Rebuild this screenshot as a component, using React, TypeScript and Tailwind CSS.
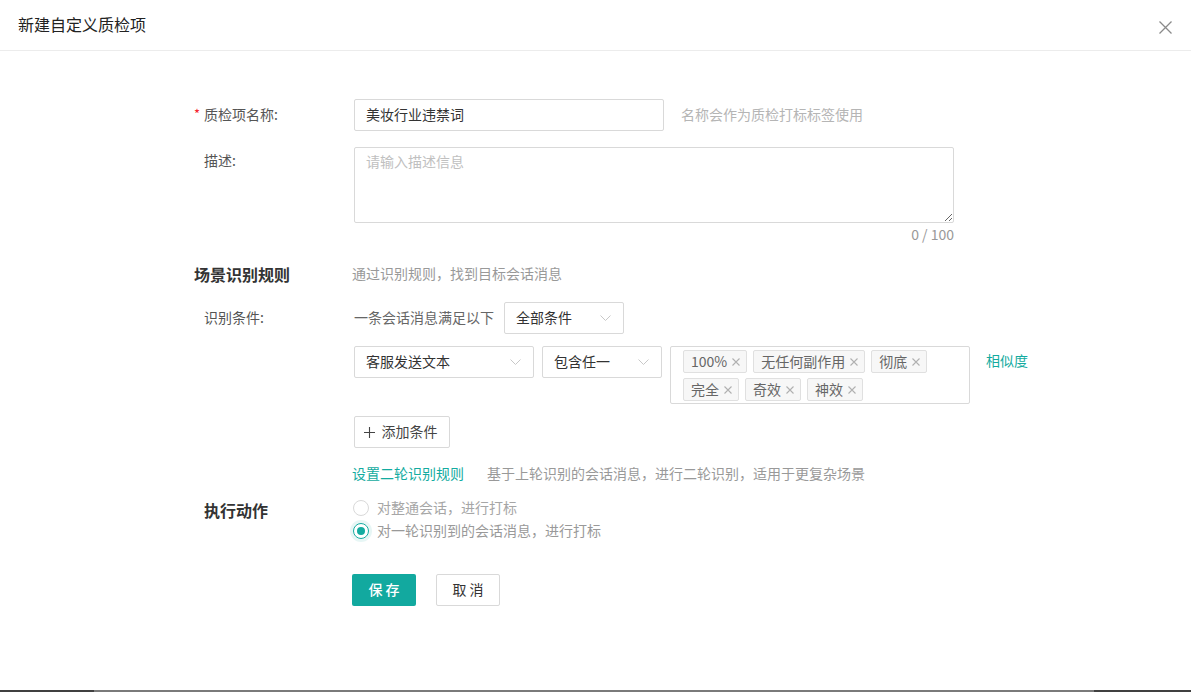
import React from "react";

const Chevron = () => (
  <svg width="11" height="7" viewBox="0 0 11 7" fill="none" className="shrink-0">
    <path d="M0.5 0.5L5.5 5.5L10.5 0.5" stroke="#c8c8c8" strokeWidth="1" />
  </svg>
);

const SmallX = () => (
  <svg width="8" height="8" viewBox="0 0 8 8" fill="none" className="shrink-0">
    <path d="M0.5 0.5L7.5 7.5M7.5 0.5L0.5 7.5" stroke="#b0b0b0" strokeWidth="1.1" />
  </svg>
);

const Select = ({ label, className }: { label: string; className: string }) => (
  <div
    className={`flex h-[32px] items-center justify-between rounded-[2px] border border-[#d9d9d9] bg-white pl-[11px] pr-[12px] text-[14px] text-[#333] ${className}`}
  >
    <span className="-mt-[2px]">{label}</span>
    <Chevron />
  </div>
);

const Tag = ({ text }: { text: string }) => (
  <span className="flex h-[23px] items-center gap-[5px] rounded-[2px] border border-[#e0e0e0] bg-[#f7f7f7] pl-[7px] pr-[6px] text-[14px] leading-none text-[#666]">
    <span className="-mt-[1px]">{text}</span>
    <SmallX />
  </span>
);

const tags1 = ["100%", "无任何副作用", "彻底"];
const tags2 = ["完全", "奇效", "神效"];

export default function App() {
  return (
    <div className="flex h-[692px] flex-col bg-white font-['Noto_Sans_CJK_SC',sans-serif] text-[14px] text-[#555]">
      {/* 标题栏 */}
      <div className="flex h-[51px] shrink-0 items-center justify-between border-b border-[#ececec] pl-[18px] pr-[19px]">
        <h1 className="-mt-[2px] text-[16px] font-normal text-[#222]">新建自定义质检项</h1>
        <svg width="13" height="13" viewBox="0 0 13 13" fill="none" className="mt-[5px]">
          <path d="M0.5 0.5L12.5 12.5M12.5 0.5L0.5 12.5" stroke="#8a8a8a" strokeWidth="1.3" />
        </svg>
      </div>

      {/* 表单 */}
      <div className="ml-[194px] flex-1">
        <div className="mt-[48px] flex h-[32px] items-center">
          <div className="-mt-[2px] flex w-[160px] shrink-0 items-center">
            <span className="w-[10px] text-[13px] text-[#f5222d]">*</span>
            <span>质检项名称:</span>
          </div>
          <input
            readOnly
            value="美妆行业违禁词"
            className="h-[32px] w-[310px] rounded-[2px] border border-[#d9d9d9] px-[11px] pb-[3px] text-[14px] text-[#333] outline-none"
          />
          <span className="-mt-[2px] ml-[17px] text-[#b5b5b5]">名称会作为质检打标标签使用</span>
        </div>

        <div className="mt-[16px] flex">
          <div className="w-[160px] shrink-0 pl-[10px] pt-[3px] leading-[20px]">描述:</div>
          <textarea
            placeholder="请输入描述信息"
            className="h-[76px] w-[600px] rounded-[2px] border border-[#d9d9d9] px-[11px] pt-[3px] pb-[5px] text-[14px] leading-[20px] text-[#333] outline-none placeholder:text-[#c0c0c0]"
          />
        </div>
        <div className="mt-[1px] ml-[160px] w-[600px] text-right leading-[20px] text-[#999]">0 / 100</div>

        {/* 场景识别规则 */}
        <div className="mt-[19px] flex h-[22px] items-center">
          <div className="w-[158px] shrink-0 text-[16px] font-bold text-[#333]">场景识别规则</div>
          <span className="-mt-[1px] text-[#999]">通过识别规则，找到目标会话消息</span>
        </div>

        <div className="mt-[17px] flex h-[32px] items-center">
          <div className="-mt-[2px] w-[160px] shrink-0 pl-[10px]">识别条件:</div>
          <span className="-mt-[2px] text-[#666]">一条会话消息满足以下</span>
          <Select label="全部条件" className="ml-[10px] w-[120px]" />
        </div>

        <div className="mt-[12px] flex items-start">
          <div className="w-[160px] shrink-0" />
          <Select label="客服发送文本" className="w-[180px]" />
          <Select label="包含任一" className="ml-[8px] w-[120px]" />
          <div className="ml-[8px] flex h-[58px] w-[300px] flex-col gap-[5px] rounded-[2px] border border-[#d9d9d9] pl-[12px] pt-[3px]">
            <div className="flex gap-[6px]">
              {tags1.map((t) => (
                <Tag key={t} text={t} />
              ))}
            </div>
            <div className="flex gap-[6px]">
              {tags2.map((t) => (
                <Tag key={t} text={t} />
              ))}
            </div>
          </div>
          <span className="ml-[16px] mt-[4px] leading-[20px] text-[#13aba0]">相似度</span>
        </div>

        <button
          type="button"
          className="mt-[12px] ml-[160px] flex h-[32px] w-[96px] items-center justify-center gap-[7px] rounded-[2px] border border-[#d9d9d9] bg-white text-[14px] text-[#444]"
        >
          <svg width="11" height="11" viewBox="0 0 11 11" fill="none" className="-ml-[3px]">
            <path d="M5.5 0V11M0 5.5H11" stroke="#444" strokeWidth="1.1" />
          </svg>
          <span className="-mt-[2px]">添加条件</span>
        </button>

        <div className="mt-[15px] flex h-[20px] items-center">
          <span className="ml-[158px] text-[#13aba0]">设置二轮识别规则</span>
          <span className="ml-[23px] text-[#999]">基于上轮识别的会话消息，进行二轮识别，适用于更复杂场景</span>
        </div>

        {/* 执行动作 */}
        <div className="mt-[14px] flex">
          <div className="w-[159px] shrink-0 pl-[10px] pt-[2px] text-[16px] font-bold leading-[22px] text-[#333]">执行动作</div>
          <div className="flex flex-col gap-[1px]">
            <label className="flex h-[22px] items-center gap-[8px] text-[#a6a6a6]">
              <span className="size-[16px] rounded-full border border-[#d9d9d9] bg-white" />
              <span className="-mt-[2px]">对整通会话，进行打标</span>
            </label>
            <label className="flex h-[22px] items-center gap-[8px] text-[#999]">
              <span className="flex size-[16px] items-center justify-center rounded-full border border-[#13aba0] shadow-[0_0_0_3px_rgba(19,171,160,0.1)]">
                <span className="size-[8px] rounded-full bg-[#13aba0]" />
              </span>
              <span className="-mt-[2px]">对一轮识别到的会话消息，进行打标</span>
            </label>
          </div>
        </div>

        <div className="mt-[32px] ml-[158px] flex gap-[20px]">
          <button
            type="button"
            className="h-[32px] w-[64px] rounded-[2px] bg-[#12a99f] pb-[2px] text-[14px] font-medium text-white"
          >
            保 存
          </button>
          <button
            type="button"
            className="h-[32px] w-[64px] rounded-[2px] border border-[#d9d9d9] bg-white pb-[2px] text-[14px] text-[#333]"
          >
            取 消
          </button>
        </div>
      </div>

      {/* 底部滚动条 */}
      <div className="flex h-[2px] shrink-0">
        <div className="w-[94px] bg-[#404040]" />
        <div className="flex-1 bg-[#7a7a7a]" />
        <div className="w-[97px] bg-[#404040]" />
      </div>
    </div>
  );
}
